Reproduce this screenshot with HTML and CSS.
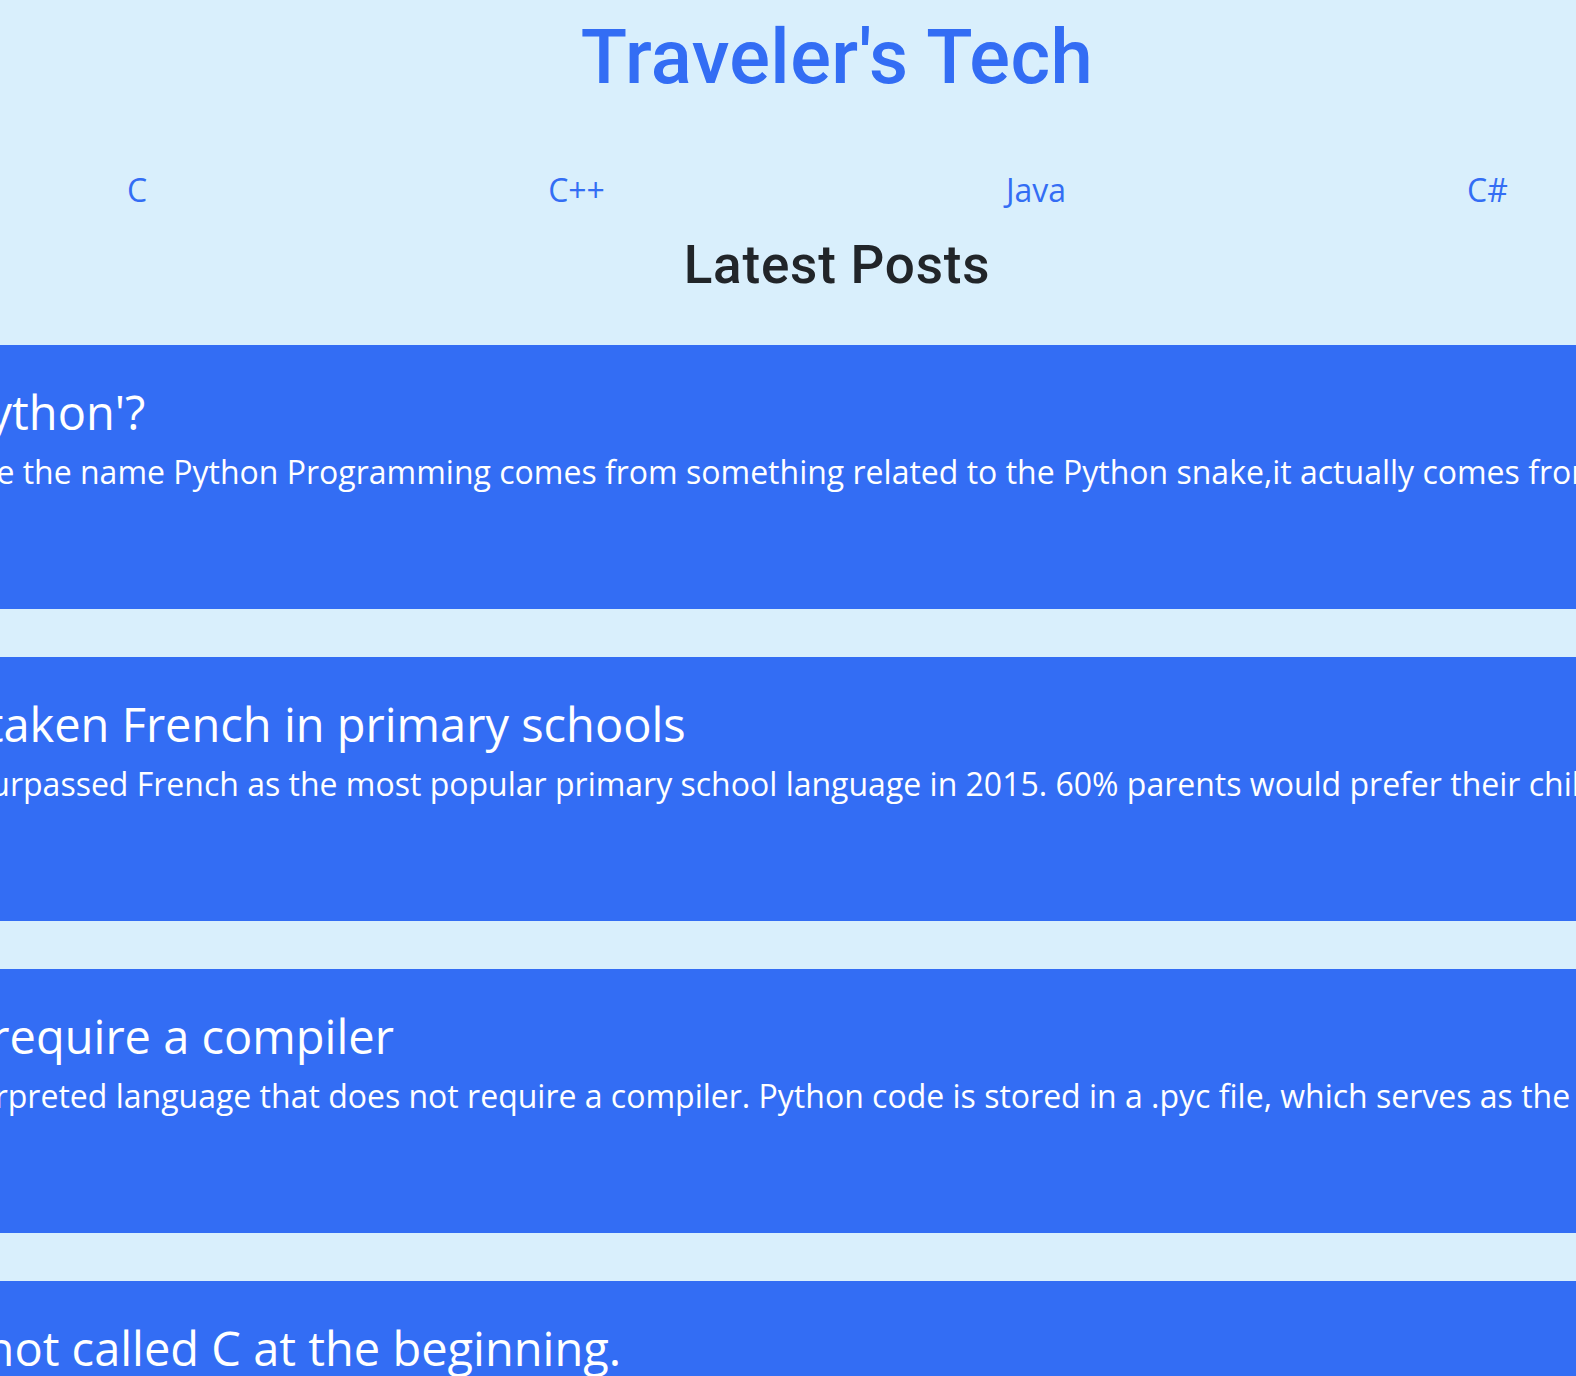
FILE: index.html
```html
<!DOCTYPE html>
<html lang="en">
<head>
<meta charset="utf-8">
<title>Traveler's Tech</title>
<link rel="stylesheet" href="styles.css">
</head>
<body>
  <header class="site-header">
    <h1 class="site-title">Traveler's Tech</h1>
    <nav class="nav">
      <a class="nav-link" href="#">C</a>
      <a class="nav-link" href="#">C++</a>
      <a class="nav-link" href="#">Java</a>
      <a class="nav-link" href="#">C#</a>
    </nav>
    <h2 class="section-title">Latest Posts</h2>
  </header>
  <main class="posts">
    <article class="post">
      <div class="post-body">
        <h3 class="post-title">Why is it called 'Python'?</h3>
        <p class="post-text">While many people believe the name Python Programming comes from something related to the Python snake,it actually comes from the British comedy group Monty Python.</p>
      </div>
    </article>
    <article class="post">
      <div class="post-body">
        <h3 class="post-title">Spanish has overtaken French in primary schools</h3>
        <p class="post-text">Data show that Spanish surpassed French as the most popular primary school language in 2015. 60% parents would prefer their children to learn Spanish.</p>
      </div>
    </article>
    <article class="post">
      <div class="post-body">
        <h3 class="post-title">Python need not require a compiler</h3>
        <p class="post-text">Python is a high-level interpreted language that does not require a compiler. Python code is stored in a .pyc file, which serves as the bytecode for the interpreter.</p>
      </div>
    </article>
    <article class="post">
      <div class="post-body">
        <h3 class="post-title">Originally, C was not called C at the beginning.</h3>
        <p class="post-text">The C language was first called B, which was developed by Ken Thompson at Bell Labs.</p>
      </div>
    </article>
  </main>
</body>
</html>
```
FILE: styles.css
```css
html, body {
  margin: 0;
  padding: 0;
}
body {
  background: #d9effc;
  font-family: "Open Sans", "Noto Sans", sans-serif;
  color: #212529;
  overflow-x: hidden;
}
.site-header {
  display: flex;
  flex-direction: column;
}
.site-title {
  margin: 0;
  padding: 12px 0 0 98px;
  text-align: center;
  font-family: Roboto, "Noto Sans", sans-serif;
  font-weight: 500;
  font-size: 76px;
  line-height: 91px;
  letter-spacing: 0.4px;
  color: #336df4;
}
.nav {
  display: flex;
  gap: 401px;
  padding-left: 127px;
  margin-top: 63px;
}
.nav-link {
  font-size: 32px;
  line-height: 48px;
  color: #336df4;
  text-decoration: none;
}
.section-title {
  margin: 19px 0 0;
  padding-left: 98px;
  text-align: center;
  font-family: Roboto, "Noto Sans", sans-serif;
  font-weight: 500;
  font-size: 53px;
  line-height: 64px;
  letter-spacing: 0.8px;
  color: #212529;
}
.posts {
  margin-top: 48px;
  display: flex;
  flex-direction: column;
  gap: 48px;
}
.post {
  background: #336df4;
  height: 264px;
  color: #fff;
  box-sizing: border-box;
  padding-top: 39px;
  overflow: hidden;
}
.post-body {
  margin-left: -385px;
  white-space: nowrap;
}
.post-title {
  margin: 0;
  font-weight: 400;
  font-size: 47px;
  line-height: 56px;
}
.post-text {
  margin: 8px 0 0;
  font-size: 32px;
  line-height: 48px;
}
```
